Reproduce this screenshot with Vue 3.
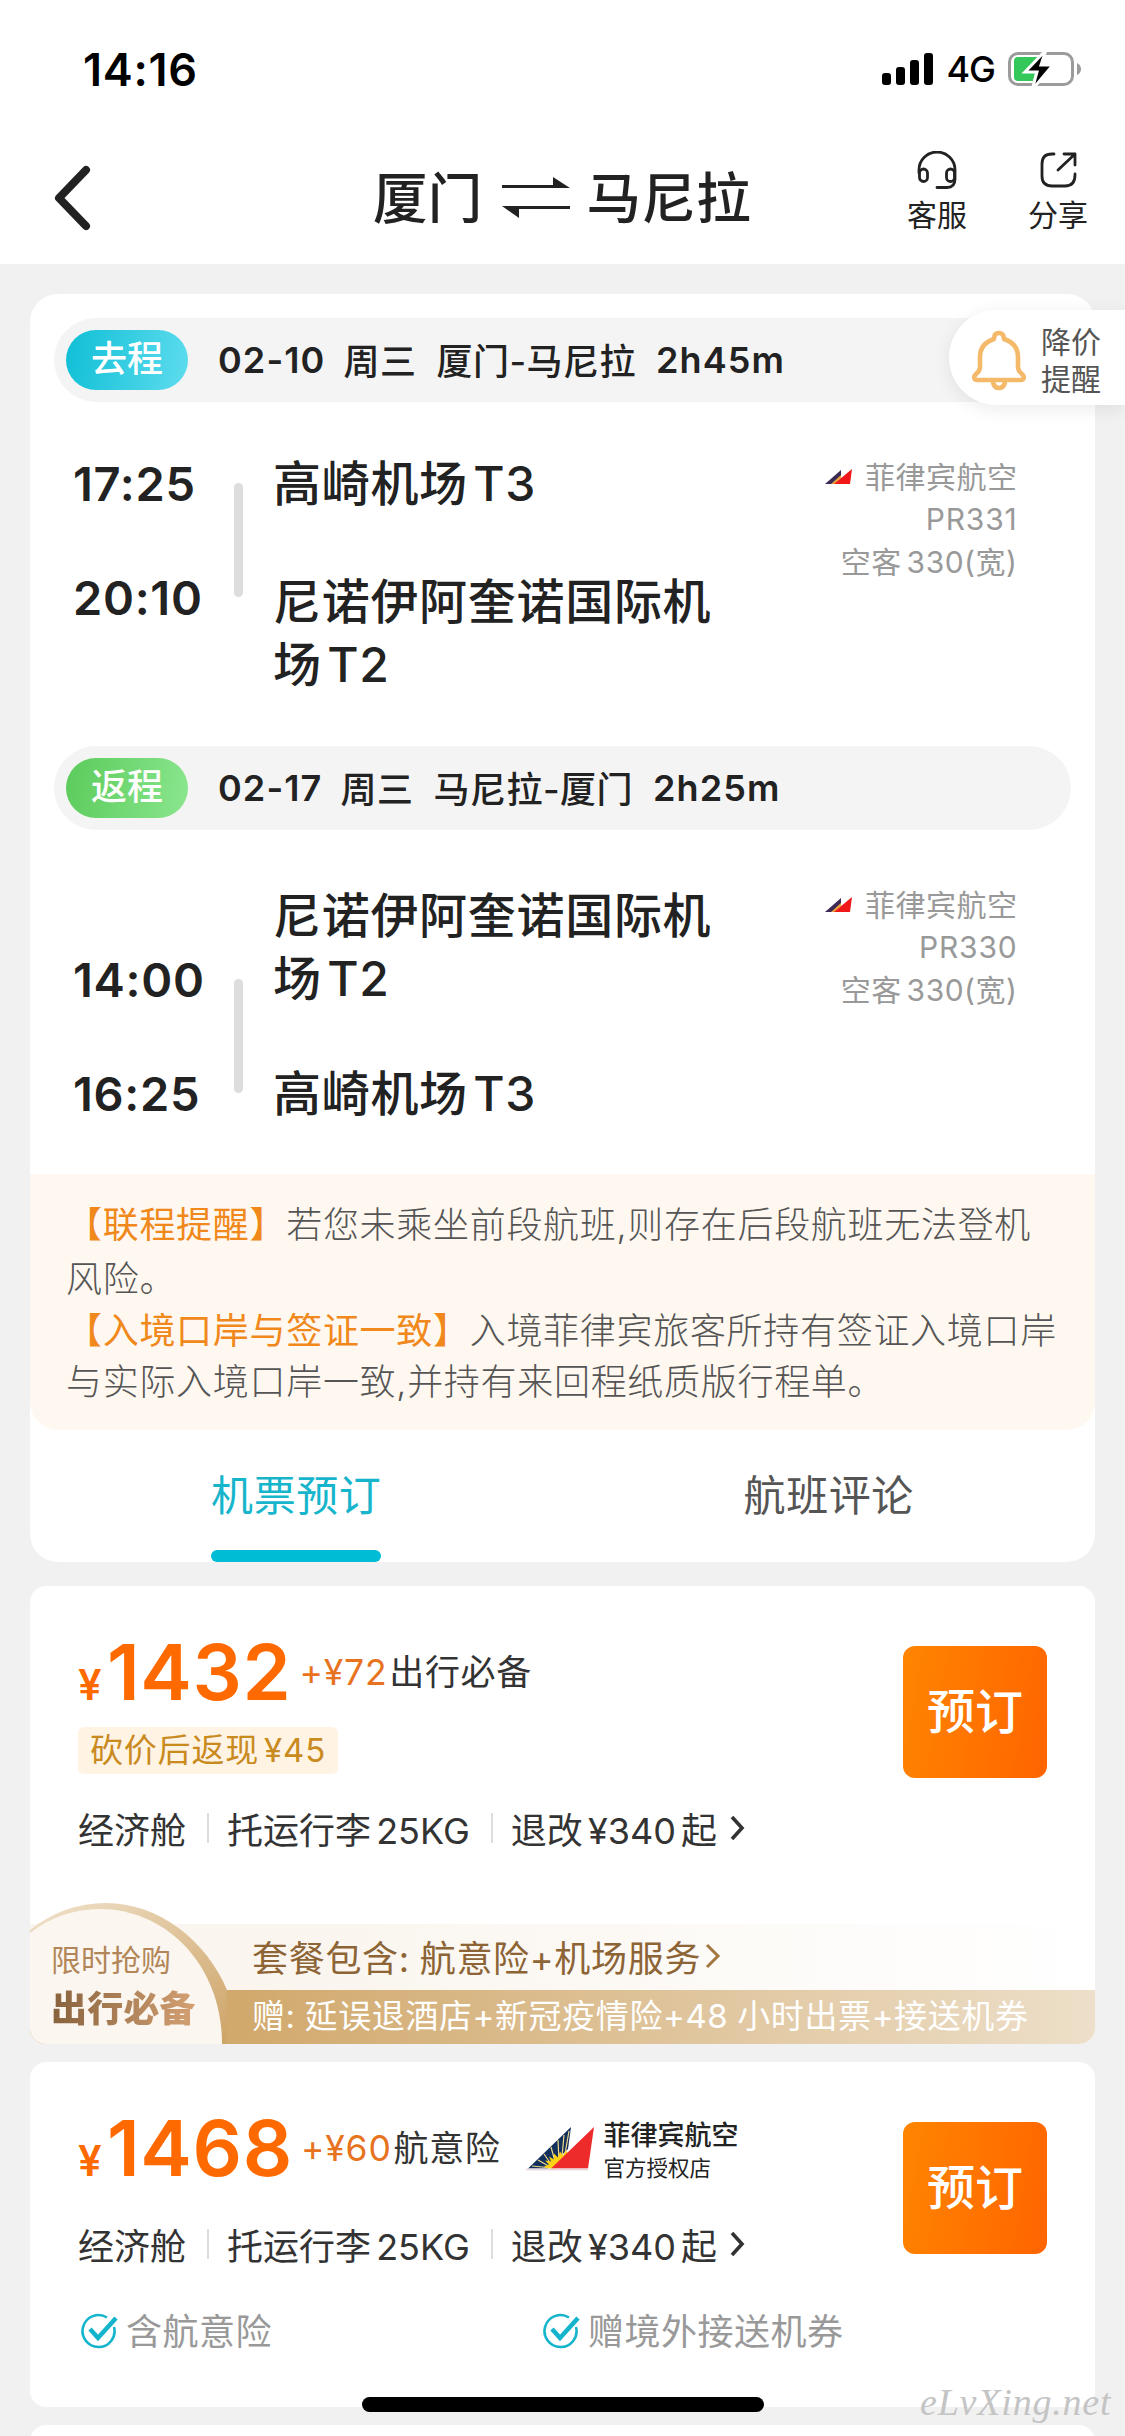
<script setup>
import { ref } from 'vue';

const activeTab = ref('book');

const tabs = [
  { key: 'book', label: '机票预订' },
  { key: 'comment', label: '航班评论' }
];

// Heen- en terugvlucht
const segments = [
  {
    type: 'outbound', label: '去程', date: '02-10', week: '周三', route: '厦门-马尼拉', duration: '2h45m',
    depTime: '17:25', arrTime: '20:10',
    depPort: ['高崎机场 T3'], arrPort: ['尼诺伊阿奎诺国际机', '场 T2'],
    flightNo: 'PR331'
  },
  {
    type: 'inbound', label: '返程', date: '02-17', week: '周三', route: '马尼拉-厦门', duration: '2h25m',
    depTime: '14:00', arrTime: '16:25',
    depPort: ['尼诺伊阿奎诺国际机', '场 T2'], arrPort: ['高崎机场 T3'],
    flightNo: 'PR330'
  }
];

const offers = [
  { price: '1432', extra: '72', extraName: '出行必备', cashback: '45', promo: true },
  { price: '1468', extra: '60', extraName: '航意险', shop: true, perks: ['含航意险', '赠境外接送机券'] }
];
</script>

<template>
  <div class="page">
    <header class="top">
      <div class="status">
        <span class="clock">14:16</span>
        <div class="status-right">
          <svg class="signal" width="52" height="33" viewBox="0 0 52 33">
            <rect x="0" y="20" width="9" height="12" rx="3" />
            <rect x="14" y="14" width="9" height="18" rx="3" />
            <rect x="28" y="7" width="9" height="25" rx="3" />
            <rect x="42" y="0" width="9" height="32" rx="3" />
          </svg>
          <span class="net">4G</span>
          <svg width="74" height="36" viewBox="0 0 74 36">
            <rect x="1.5" y="2.5" width="63" height="31" rx="8.5" fill="none" stroke="#9b9b9b" stroke-width="3" />
            <path d="M69 12q4 2 4 6t-4 6z" fill="#9b9b9b" />
            <path d="M10 6h22l-7 24H10q-4 0-4-4V10q0-4 4-4z" fill="#34c759" />
            <path d="M38 -1L17 21h12l-5 18L45 14H33z" fill="#000" stroke="#fff" stroke-width="3" />
          </svg>
        </div>
      </div>
      <div class="nav">
        <svg class="nav-back" width="40" height="70" viewBox="0 0 40 70">
          <path d="M33 7L6 35l27 28" fill="none" stroke="#222" stroke-width="8" stroke-linecap="round" stroke-linejoin="round" />
        </svg>
        <h1 class="title">
          <span>厦门</span>
          <svg width="68" height="42" viewBox="0 0 68 42">
            <path d="M0 8h51V0l17 11H0zM68 32H17v9L0 29h68z" fill="#222" />
          </svg>
          <span>马尼拉</span>
        </h1>
        <div class="actions">
          <div class="action">
            <svg width="40" height="40" viewBox="0 0 40 40" fill="none" stroke="#222" stroke-width="2.8" stroke-linecap="round">
              <path d="M2 22v-3a18 18 0 0 1 36 0v9q0 8.500-8 8.500H20" />
              <rect x="2.500" y="18" width="8" height="12.500" rx="4" />
              <rect x="29.500" y="18" width="8" height="12.500" rx="4" />
            </svg>
            <span>客服</span>
          </div>
          <div class="action">
            <svg width="40" height="40" viewBox="0 0 40 40" fill="none" stroke="#222" stroke-width="2.8" stroke-linecap="round" stroke-linejoin="round">
              <path d="M16 3h-2Q4 3 4 13v12q0 10 10 10h13q10 0 10-11v-1M26 3h11v11M37 3L20 19" />
            </svg>
            <span>分享</span>
          </div>
        </div>
      </div>
    </header>

    <section class="card flights">
      <div v-for="seg in segments" :key="seg.type" class="segment" :class="seg.type">
        <div class="seg-bar">
          <span class="pill">{{ seg.label }}</span>
          <span class="date">{{ seg.date }}</span>
          <span class="week">{{ seg.week }}</span>
          <span class="route">{{ seg.route }}</span>
          <span class="duration">{{ seg.duration }}</span>
        </div>
        <div class="seg-body">
          <div class="times">
            <span>{{ seg.depTime }}</span>
            <span>{{ seg.arrTime }}</span>
          </div>
          <i class="line"></i>
          <div class="ports">
            <div><p v-for="t in seg.depPort" :key="t">{{ t }}</p></div>
            <div><p v-for="t in seg.arrPort" :key="t">{{ t }}</p></div>
          </div>
          <div class="carrier">
            <p>
              <svg width="28" height="16" viewBox="0 0 28 16">
                <path d="M0 15L16 1v6L8 15z" fill="#3a2a55" />
                <path d="M6 15l10-9v3l-6 6z" fill="#e8a33c" />
                <path d="M9 15L27 0l-2 15z" fill="#f01818" />
              </svg>
              <span class="airline">菲律宾航空</span>
            </p>
            <p class="flight-no">{{ seg.flightNo }}</p>
            <p class="plane">空客 330(宽)</p>
          </div>
        </div>
      </div>

      <div class="notice">
        <p class="first"><b>【联程提醒】</b>若您未乘坐前段航班,则存在后段航班无法登机</p>
        <p class="first">风险。</p>
        <p><b>【入境口岸与签证一致】</b>入境菲律宾旅客所持有签证入境口岸</p>
        <p>与实际入境口岸一致,并持有来回程纸质版行程单。</p>
      </div>

      <div class="tabs">
        <div v-for="tab in tabs" :key="tab.key" class="tab" :class="{ active: activeTab === tab.key }" @click="activeTab = tab.key">
          <span>{{ tab.label }}</span>
        </div>
      </div>
    </section>

    <section v-for="o in offers" :key="o.price" class="card offer" :class="{ second: o.shop }">
      <div class="offer-main">
        <div class="info">
          <div class="price-row">
            <span class="yen">¥</span><span class="price">{{ o.price }}</span>
            <span class="extra">+¥{{ o.extra }}</span><span class="extra-name">{{ o.extraName }}</span>
            <div v-if="o.shop" class="shop">
              <svg width="70" height="50" viewBox="0 0 70 50">
                <path d="M2 45.500L45 4l-3 22-20 19.500z" fill="#12305c" />
                <g stroke="#f3d98a" stroke-width="1.200">
                  <path d="M26 45L6 43M26 45L12 37M27 44L18 31M30 42L25 24M33 39L32 17M36 34L38 12M39 31L43 8" />
                </g>
                <path d="M22 45.500l-4-2 5-2-4-4 6 1-2-5 5 3 0-6 4 4 2-6 3 4 3-5 2 3-1 5-12 10z" fill="#fcd116" />
                <path d="M25 45.500L68 4l-6 41.500z" fill="#ee2b2b" />
                <path d="M0 46.500h62" stroke="#ead9de" stroke-width="2" />
              </svg>
              <div class="shop-text">
                <strong>菲律宾航空</strong>
                <span>官方授权店</span>
              </div>
            </div>
          </div>
          <div v-if="o.cashback" class="cashback">砍价后返现 ¥{{ o.cashback }}</div>
          <div class="rules">
            <span class="cabin">经济舱</span>
            <i></i>
            <span class="bag">托运行李 25KG</span>
            <i></i>
            <span class="refund">退改 ¥340 起</span>
            <svg width="16" height="26" viewBox="0 0 16 26"><path d="M3 2l10 11L3 24" fill="none" stroke="#333" stroke-width="3.600" /></svg>
          </div>
        </div>
        <button class="book">预订</button>
      </div>

      <div v-if="o.perks" class="perks">
        <span v-for="p in o.perks" :key="p">
          <svg width="38" height="38" viewBox="0 0 38 38" fill="none" stroke="#14b4cc">
            <path d="M27 4.500A16 16 0 1 0 34 14" stroke-width="2.600" />
            <path d="M10 16l8 9L36 5" stroke-width="4.500" />
          </svg>{{ p }}
        </span>
      </div>

      <div v-if="o.promo" class="promo">
        <div class="promo-top">
          <span>套餐包含: 航意险+机场服务</span>
          <svg width="17" height="26" viewBox="0 0 17 26"><path d="M3 2l11 11L3 24" fill="none" stroke="#a3773f" stroke-width="3" /></svg>
        </div>
        <div class="promo-bottom">赠: 延误退酒店+新冠疫情险+48 小时出票+接送机券</div>
        <div class="badge">
          <svg class="badge-bg" width="200" height="142" viewBox="0 0 200 142">
            <defs>
              <linearGradient id="ring" x1="0" y1="0" x2="1" y2="1">
                <stop offset="0" stop-color="#f1e2cc" />
                <stop offset="1" stop-color="#cda467" />
              </linearGradient>
            </defs>
            <path d="M0 28Q34 1 76 1C128 1 176 38 197 88V142H0z" fill="url(#ring)" />
            <path d="M0 31Q31 7 70 7C136 7 192 63 192 142H0z" fill="#fbf6f0" />
          </svg>
          <span class="badge-small">限时抢购</span>
          <span class="badge-big">出行必备</span>
        </div>
      </div>
    </section>

    <section class="card rest"></section>

    <!-- Prijsalarm, zweeft tegen de rechterrand -->
    <div class="alert">
      <svg width="54" height="62" viewBox="0 0 54 62" fill="none" stroke="#f5b96a" stroke-width="4.600" stroke-linejoin="round" stroke-linecap="round">
        <path d="M27 3c-3 0-5 2-5 6-9 3-14 9-14 18v10q0 4-4 7c-3 3-2 6 1 6h44c3 0 4-3 1-6q-4-3-4-7V27c0-9-5-15-14-18 0-4-2-6-5-6z" />
        <path d="M21 52q1 6 6 6t6-6" />
      </svg>
      <span>降价<br>提醒</span>
    </div>
    <div class="home-bar"></div>
    <div class="watermark">eLvXing.net</div>
  </div>
</template>

<style>
body { margin: 0; background: #f1f1f1; }
</style>

<style scoped>
.page {
  position: relative; width: 1125px; height: 2436px; overflow: hidden;
  background: #f1f1f1; color: #222;
  font-family: Inter, "Noto Sans CJK SC", sans-serif;
}
p, h1 { margin: 0; }
svg { flex: none; display: block; }
span { white-space: nowrap; }

/* Kop */
.top { height: 264px; background: #fff; }
.status { height: 138px; display: flex; justify-content: space-between; align-items: center; padding: 0 43px 0 83px; box-sizing: border-box; color: #000; }
.clock { font-size: 45px; font-weight: 600; letter-spacing: 0.7px; }
.status-right { display: flex; align-items: center; }
.net { font-size: 36px; font-weight: 500; letter-spacing: -1px; margin: 0 13px 0 12px; }
.nav { height: 126px; position: relative; display: flex; justify-content: space-between; align-items: center; padding: 0 37px 0 53px; }
.nav-back { margin-top: -6px; }
.title { position: absolute; left: 373px; top: 20px; display: flex; align-items: center; font-size: 54.500px; line-height: 80px; font-weight: 500; letter-spacing: 0.3px; }
.title svg { margin: 0 17px 0 19px; }
.actions { display: flex; gap: 61px; margin-top: -16px; }
.action { display: flex; flex-direction: column; align-items: center; font-size: 30px; line-height: 40px; gap: 4px; }

/* Vluchten */
.card { margin: 0 30px; background: #fff; border-radius: 16px; overflow: hidden; }
.flights { margin-top: 30px; height: 1268px; border-radius: 28px; box-sizing: border-box; padding-top: 24px; }
.segment { height: 428px; }
.seg-bar { margin: 0 24px; height: 84px; border-radius: 42px; background: #f4f4f4; display: flex; align-items: center; font-size: 36px; font-weight: 600; }
.pill { width: 122px; height: 60px; border-radius: 30px; margin: 0 30px 0 12px; color: #fff; text-align: center; line-height: 58px; font-size: 36px; font-weight: 500; background: linear-gradient(100deg, #0fbfd6, #5edcee); }
.inbound .pill { background: linear-gradient(100deg, #5bcb5b, #8ae68e); }
.date, .duration { letter-spacing: 1.1px; }
.week, .route { font-weight: 500; font-size: 36px; letter-spacing: 0.5px; position: relative; top: -1px; }
.week { margin: 0 20px 0 18px; }
.route { margin-right: 20px; }
.seg-body { display: flex; }
.times { width: 161px; padding: 52px 0 0 43px; box-sizing: content-box; display: flex; flex-direction: column; gap: 54px; font-size: 47px; line-height: 60px; font-weight: 600; letter-spacing: 0.7px; }
.line { width: 9px; height: 114px; margin-top: 81px; border-radius: 5px; background: #ddd; }
.ports { width: 461px; padding: 50px 0 0 30px; font-size: 48px; line-height: 63px; font-weight: 500; letter-spacing: 0.7px; word-spacing: -8px; white-space: nowrap; display: flex; flex-direction: column; gap: 55px; }
.inbound .times { padding-top: 120px; }
.inbound .line { margin-top: 149px; }
.inbound .ports { padding-top: 54px; gap: 52px; }
.carrier { width: 283.500px; padding-top: 54px; font-size: 30px; line-height: 42.300px; color: #999; letter-spacing: 0.5px; }
.carrier p { display: flex; justify-content: flex-end; align-items: center; }
.carrier svg { margin-right: 12px; }
.carrier .flight-no { letter-spacing: 0.8px; }
.carrier .plane { word-spacing: -4px; }

/* Waarschuwing */
.notice { height: 256px; box-sizing: border-box; padding: 24px 0 0 36px; background: #fff8f0; border-radius: 0 0 28px 28px; font-size: 36px; line-height: 51px; letter-spacing: 0.7px; color: #555; font-weight: 300; white-space: nowrap; }
.notice p.first { line-height: 54px; }
.notice b { font-weight: 400; color: #f0881c; }

.tabs { display: flex; height: 132px; }
.tab { flex: 1; display: flex; justify-content: center; font-size: 42px; color: #555; }
.tab span { position: relative; height: 132px; line-height: 132px; letter-spacing: 0.6px; }
.tab.active { color: #17b5cb; }
.tab.active span::after { content: ''; position: absolute; left: 0; right: 0; bottom: 0; height: 12px; border-radius: 6px; background: #00bcd4; }

/* Aanbiedingen */
.offer { position: relative; margin-top: 24px; height: 458px; display: flex; flex-direction: column; }
.offer.second { margin-top: 18px; height: 345px; }
.offer-main { display: flex; justify-content: space-between; padding: 0 48px; }
.price-row { display: flex; align-items: baseline; height: 112px; line-height: 90px; margin-top: 41px; }
.yen { width: 29px; font-size: 42px; font-weight: 600; color: #ff6a00; }
.price { font-size: 77.500px; font-weight: 600; color: #ff6a00; letter-spacing: 0.6px; }
.extra { font-size: 35.500px; color: #e8731f; margin-left: 8px; position: relative; top: -15px; letter-spacing: 0.8px; }
.extra-name { font-size: 35px; color: #333; margin-left: 2px; position: relative; top: -15px; letter-spacing: 0.6px; }
.cashback { width: 260px; height: 47px; margin-top: -12px; border-radius: 6px; background: #fff3e4; color: #c98a1e; font-size: 33px; line-height: 47px; text-align: center; letter-spacing: 0.8px; word-spacing: -5px; white-space: nowrap; }
.rules { display: flex; align-items: center; height: 50px; margin-top: 29px; font-size: 36px; color: #333; word-spacing: -5px; }
.rules i { width: 2px; height: 30px; background: #ddd; margin: 0 18px 0 21px; }
.rules svg { margin-left: 12px; }
.second .rules { margin-top: 4px; }
.book { width: 144px; height: 132px; margin-top: 60px; padding: 0; border: none; border-radius: 12px; color: #fff; font: 500 48px/124px Inter, "Noto Sans CJK SC", sans-serif; background: linear-gradient(100deg, #ff8500, #ff6400); }

.shop { display: flex; align-self: flex-start; margin: 17px 0 0 26px; }
.shop svg { margin-top: 3px; }
.shop-text { display: flex; flex-direction: column; margin-left: 7px; }
.shop-text strong { font-size: 27px; font-weight: 500; line-height: 32px; }
.shop-text span { font-size: 21.500px; line-height: 32px; }

.perks { display: grid; grid-template-columns: 462px 1fr; padding: 38px 0 0 50px; font-size: 36px; line-height: 50px; color: #999; }
.perks span { display: flex; align-items: center; letter-spacing: 0.5px; }
.perks svg { margin-right: 8px; }

.promo { position: relative; margin-top: auto; }
.promo-top { height: 64px; padding: 0 0 2px 222px; display: flex; align-items: center; font-size: 36px; letter-spacing: 0.7px; word-spacing: -1px; color: #8c6435; background: linear-gradient(90deg, #faf5ee 25%, #fff 100%); }
.promo-top svg { margin-left: 3px; }
.promo-bottom { height: 54px; padding-left: 222px; line-height: 53px; font-size: 33px; letter-spacing: 0.6px; word-spacing: -1px; color: #fff; white-space: nowrap; background: linear-gradient(90deg, #d1a96d 20%, #eddfc9); }
.badge { position: absolute; left: 0; bottom: 0; width: 200px; height: 142px; display: flex; flex-direction: column; padding-left: 21px; box-sizing: border-box; }
.badge-bg { position: absolute; left: 0; top: 0; }
.badge-small { position: relative; margin-top: 37px; font-size: 30px; line-height: 42px; color: #b28658; }
.badge-big { position: relative; font-size: 36px; line-height: 56px; font-weight: 900; letter-spacing: 0.2px; width: 146px; background: linear-gradient(90deg, #87623d, #d5a173); -webkit-background-clip: text; background-clip: text; color: transparent; }

.rest { margin-top: 18px; height: 60px; }

.alert { position: absolute; right: 0; top: 310px; width: 176px; height: 95px; border-radius: 48px 0 0 48px; background: #fff; box-shadow: 0 4px 18px rgba(0,0,0,0.08); box-sizing: border-box; padding: 6px 0 0 23px; display: flex; align-items: center; font-size: 30px; line-height: 37px; color: #555; }
.alert span { margin-left: 15px; }
.home-bar { position: absolute; left: 362px; top: 2397px; width: 402px; height: 15px; border-radius: 8px; background: #000; }
.watermark { position: absolute; left: 920px; top: 2380px; font: italic 38px/44px "Liberation Serif", serif; color: #c4c4c4; letter-spacing: 0.8px; }
</style>
